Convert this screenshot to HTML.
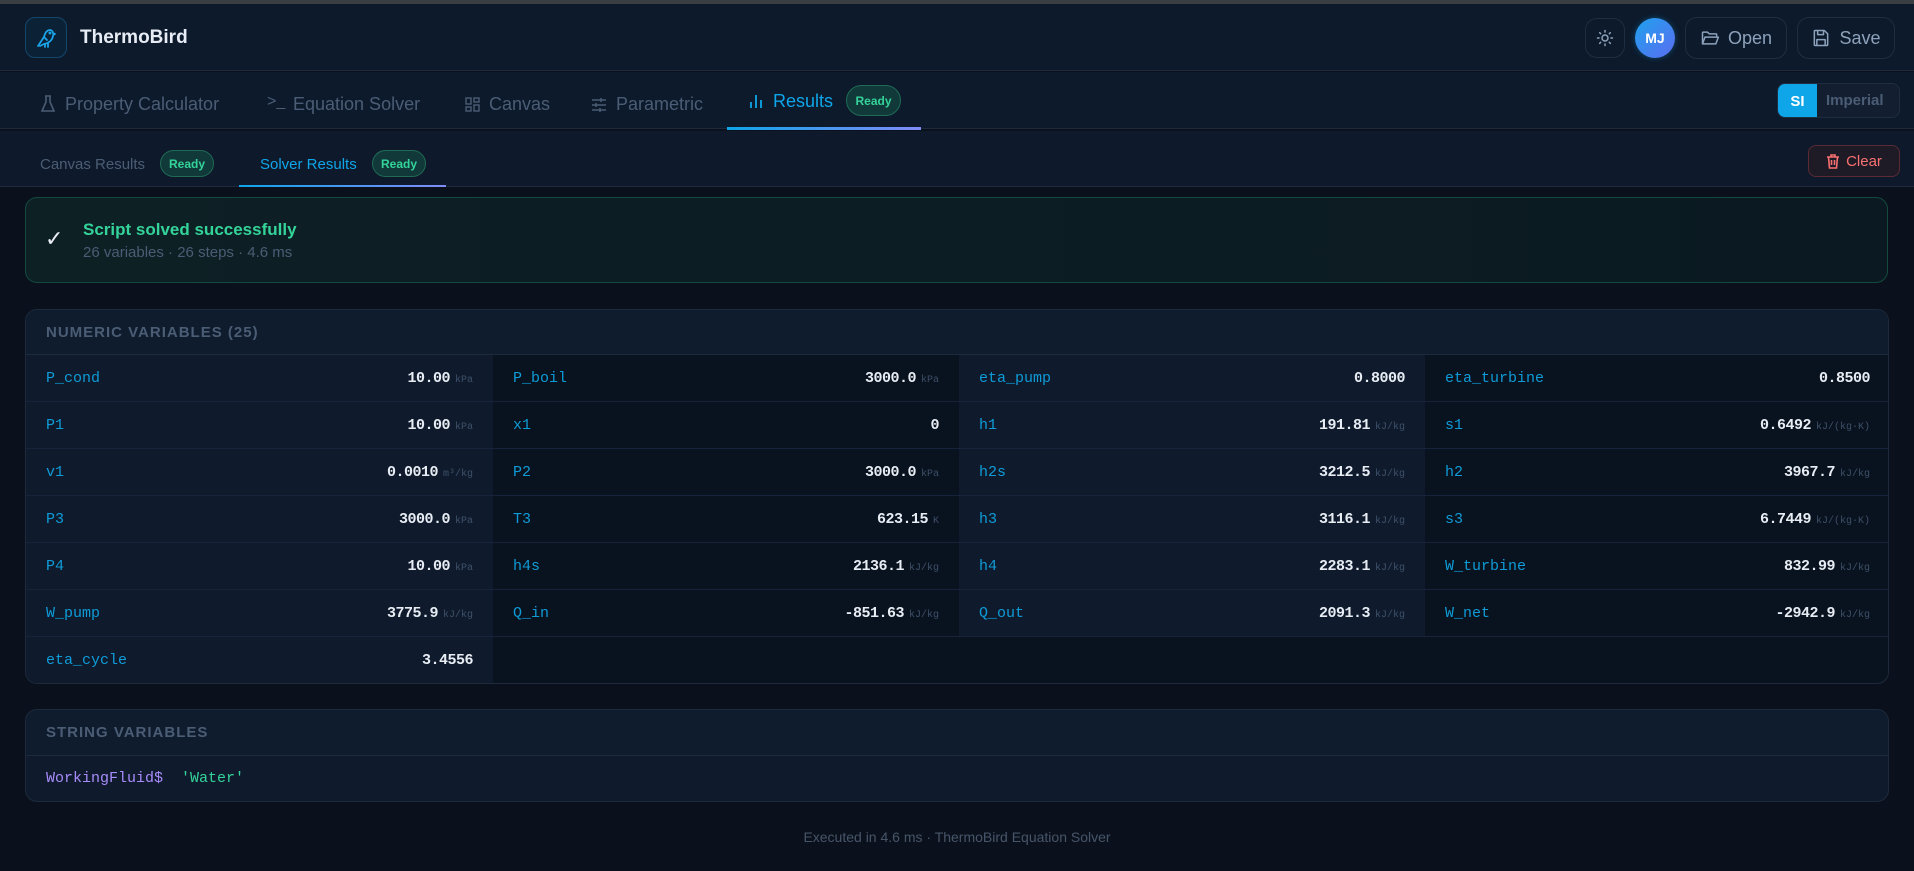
<!DOCTYPE html>
<html><head><meta charset="utf-8"><style>
*{box-sizing:border-box;margin:0;padding:0}
body{width:1914px;height:871px;background:#0a111c;font-family:"Liberation Sans",sans-serif;position:relative;overflow:hidden;color:#e2e8f0}
.a{position:absolute}
.topstrip{left:0;top:0;width:1914px;height:4px;background:#3a3d42}
.header{left:0;top:4px;width:1914px;height:67px;background:#0d1a2c;border-bottom:1px solid #1c2a3c}
.nav{left:0;top:72px;width:1914px;height:57px;background:#0d1a2c;border-bottom:1px solid #1c2a3c}
.sub{left:0;top:131px;width:1914px;height:56px;background:#0e1a2b;border-bottom:1px solid #1c2a3c}
.tab{font-size:18px;color:#4b5d75;top:94px;line-height:20px}
.badge{border:1px solid #1f6b55;background:#12393a;color:#34d399;font-weight:bold;font-size:12px;border-radius:16px;display:flex;align-items:center;justify-content:center}
.btn{border:1px solid #1f2d40;border-radius:12px;display:flex;align-items:center;justify-content:center;color:#8da2bb;font-size:18px;gap:8px}
.card{border:1px solid #1c2a3c;border-radius:12px;overflow:hidden}
.ch{background:#0f1c2e;border-bottom:1px solid #1c2a3c;color:#4b5d75;font-size:15px;font-weight:bold;letter-spacing:1px;padding-left:20px;display:flex;align-items:center}
.grid{display:grid;grid-template-columns:467px 466px 466px 465px}
.cell{height:47px;border-bottom:1px solid #17233a;display:flex;align-items:center;justify-content:space-between;padding:0 20px 0 20px;font-family:"Liberation Mono",monospace}
.c1{background:#0f1b2d}.c0{background:#09121f}
.lb{color:#0f9bd7;font-size:15px}
.v{color:#e8edf4;font-weight:bold;font-size:15px;letter-spacing:-0.5px}
.u{color:#3e5068;font-size:10px;margin-left:5px;font-weight:normal;letter-spacing:0}
</style></head><body>
<div class="a topstrip"></div>
<div class="a header"></div>
<div class="a" style="left:25px;top:17px;width:42px;height:41px;border:1px solid #14466a;background:#0b2236;border-radius:10px;display:flex;align-items:center;justify-content:center">
<svg width="24" height="24" viewBox="0 0 24 24" fill="none" stroke="#1aa3e8" stroke-width="1.8" stroke-linecap="round" stroke-linejoin="round"><path d="M4 20 L10 11 C11 7 13 4 16 4 C18 4 19 6 19 7 L21 8 L19 9 C19 14 15 17 10 18 L6 20"/><path d="M10 11 L13 14"/><path d="M11 18 L11 21 M14 17 L14 21"/><circle cx="16" cy="7" r="0.6" fill="#1aa3e8"/></svg></div>
<div class="a" style="left:80px;top:27px;font-size:19px;font-weight:bold;color:#e8edf5">ThermoBird</div>
<div class="a btn" style="left:1585px;top:18px;width:40px;height:40px"><svg width="18" height="18" viewBox="0 0 24 24" fill="none" stroke="#8da2bb" stroke-width="2" stroke-linecap="round"><circle cx="12" cy="12" r="4"/><path d="M12 2v2M12 20v2M4.9 4.9l1.4 1.4M17.7 17.7l1.4 1.4M2 12h2M20 12h2M4.9 19.1l1.4-1.4M17.7 6.3l1.4-1.4"/></svg></div>
<div class="a" style="left:1635px;top:18px;width:40px;height:40px;border-radius:50%;background:linear-gradient(135deg,#1ea2ee,#5b6cf0);box-shadow:0 0 6px #0e4a70;color:#fff;font-weight:bold;font-size:14px;display:flex;align-items:center;justify-content:center">MJ</div>
<div class="a btn" style="left:1685px;top:17px;width:102px;height:42px"><svg width="20" height="20" viewBox="0 0 24 24" fill="none" stroke="#8da2bb" stroke-width="1.8" stroke-linejoin="round"><path d="M3 19V6a1 1 0 0 1 1-1h5l2 2h8a1 1 0 0 1 1 1v2"/><path d="M3 19l3-8h16l-3 8z"/></svg>Open</div>
<div class="a btn" style="left:1797px;top:17px;width:98px;height:42px"><svg width="20" height="20" viewBox="0 0 24 24" fill="none" stroke="#8da2bb" stroke-width="1.8" stroke-linejoin="round"><path d="M5 3h11l4 4v13a1 1 0 0 1-1 1H5a1 1 0 0 1-1-1V4a1 1 0 0 1 1-1z"/><path d="M8 3v5h7V3M7 21v-7h10v7"/></svg>Save</div>

<div class="a nav"></div>
<svg class="a" style="left:41px;top:95px" width="14" height="18" viewBox="0 0 14 18" fill="none" stroke="#4b5d75" stroke-width="1.6"><path d="M4 1h6M5 1v6L1 16h12L9 7V1"/></svg>
<div class="a tab" style="left:65px">Property Calculator</div>
<div class="a tab" style="left:267px;top:92px;font-size:16px">&gt;_</div>
<div class="a tab" style="left:293px">Equation Solver</div>
<svg class="a" style="left:465px;top:97px" width="15" height="15" viewBox="0 0 15 15" fill="none" stroke="#4b5d75" stroke-width="1.4"><rect x="1" y="1" width="5" height="6"/><rect x="9" y="1" width="5" height="4"/><rect x="1" y="10" width="5" height="4"/><rect x="9" y="8" width="5" height="6"/></svg>
<div class="a tab" style="left:489px">Canvas</div>
<svg class="a" style="left:591px;top:97px" width="16" height="16" viewBox="0 0 16 16" fill="none" stroke="#4b5d75" stroke-width="1.5"><path d="M1 3h14M1 8h14M1 13h14M10 1v4M5 6v4M9 11v4"/></svg>
<div class="a tab" style="left:616px">Parametric</div>
<svg class="a" style="left:749px;top:93px" width="14" height="16" viewBox="0 0 14 16" fill="none" stroke="#0ea5e9" stroke-width="1.8"><path d="M2 9v6M7 2v13M12 7v8"/></svg>
<div class="a tab" style="left:773px;top:91px;color:#0ea5e9">Results</div>
<div class="a badge" style="left:846px;top:85px;width:55px;height:31px">Ready</div>
<div class="a" style="left:727px;top:127px;width:194px;height:3px;background:linear-gradient(90deg,#0ea5e9,#818cf8)"></div>
<div class="a" style="left:1777px;top:83px;width:123px;height:35px;border:1px solid #1f2d40;border-radius:8px;background:#131f31;overflow:hidden">
<div style="position:absolute;left:0;top:0;width:39px;height:35px;background:#0ea5e9;color:#fff;font-weight:bold;font-size:15px;display:flex;align-items:center;justify-content:center">SI</div>
<div style="position:absolute;left:48px;top:8px;color:#4b5d75;font-size:15px;font-weight:bold">Imperial</div></div>

<div class="a sub"></div>
<div class="a" style="left:40px;top:156px;font-size:15px;color:#4b5d75">Canvas Results</div>
<div class="a badge" style="left:160px;top:150px;width:54px;height:27px">Ready</div>
<div class="a" style="left:260px;top:156px;font-size:15px;color:#0ea5e9">Solver Results</div>
<div class="a badge" style="left:372px;top:150px;width:54px;height:27px">Ready</div>
<div class="a" style="left:239px;top:185px;width:207px;height:2px;background:linear-gradient(90deg,#0ea5e9,#818cf8)"></div>
<div class="a" style="left:1808px;top:145px;width:92px;height:32px;border:1px solid #5a2a35;background:#1e1a26;border-radius:8px;display:flex;align-items:center;justify-content:center;gap:6px;color:#f87171;font-size:15px"><svg width="14" height="15" viewBox="0 0 14 15" fill="none" stroke="#f87171" stroke-width="1.6"><path d="M1 3h12M5 3V1h4v2M2.5 3l1 11h7l1-11M5.5 6v5M8.5 6v5"/></svg>Clear</div>

<div class="a" style="left:25px;top:197px;width:1863px;height:86px;border:1px solid #144a3e;border-radius:12px;background:linear-gradient(90deg,#0d2024,#0b1a22)"></div>
<div class="a" style="left:45px;top:226px;font-size:22px;color:#e8edf5">✓</div>
<div class="a" style="left:83px;top:220px;font-size:17px;font-weight:bold;color:#34d399">Script solved successfully</div>
<div class="a" style="left:83px;top:244px;font-size:15px;color:#4b5d75">26 variables · 26 steps · 4.6 ms</div>

<div class="a card" style="left:25px;top:309px;width:1864px;height:375px;background:#09121f">
<div class="ch" style="height:45px">NUMERIC VARIABLES (25)</div>
<div class="grid">
<div class="cell c1"><span class="lb">P_cond</span><span class="v">10.00<span class="u">kPa</span></span></div>
<div class="cell c0"><span class="lb">P_boil</span><span class="v">3000.0<span class="u">kPa</span></span></div>
<div class="cell c1"><span class="lb">eta_pump</span><span class="v">0.8000</span></div>
<div class="cell c0"><span class="lb">eta_turbine</span><span class="v">0.8500</span></div>
<div class="cell c1"><span class="lb">P1</span><span class="v">10.00<span class="u">kPa</span></span></div>
<div class="cell c0"><span class="lb">x1</span><span class="v">0</span></div>
<div class="cell c1"><span class="lb">h1</span><span class="v">191.81<span class="u">kJ/kg</span></span></div>
<div class="cell c0"><span class="lb">s1</span><span class="v">0.6492<span class="u">kJ/(kg·K)</span></span></div>
<div class="cell c1"><span class="lb">v1</span><span class="v">0.0010<span class="u">m³/kg</span></span></div>
<div class="cell c0"><span class="lb">P2</span><span class="v">3000.0<span class="u">kPa</span></span></div>
<div class="cell c1"><span class="lb">h2s</span><span class="v">3212.5<span class="u">kJ/kg</span></span></div>
<div class="cell c0"><span class="lb">h2</span><span class="v">3967.7<span class="u">kJ/kg</span></span></div>
<div class="cell c1"><span class="lb">P3</span><span class="v">3000.0<span class="u">kPa</span></span></div>
<div class="cell c0"><span class="lb">T3</span><span class="v">623.15<span class="u">K</span></span></div>
<div class="cell c1"><span class="lb">h3</span><span class="v">3116.1<span class="u">kJ/kg</span></span></div>
<div class="cell c0"><span class="lb">s3</span><span class="v">6.7449<span class="u">kJ/(kg·K)</span></span></div>
<div class="cell c1"><span class="lb">P4</span><span class="v">10.00<span class="u">kPa</span></span></div>
<div class="cell c0"><span class="lb">h4s</span><span class="v">2136.1<span class="u">kJ/kg</span></span></div>
<div class="cell c1"><span class="lb">h4</span><span class="v">2283.1<span class="u">kJ/kg</span></span></div>
<div class="cell c0"><span class="lb">W_turbine</span><span class="v">832.99<span class="u">kJ/kg</span></span></div>
<div class="cell c1"><span class="lb">W_pump</span><span class="v">3775.9<span class="u">kJ/kg</span></span></div>
<div class="cell c0"><span class="lb">Q_in</span><span class="v">-851.63<span class="u">kJ/kg</span></span></div>
<div class="cell c1"><span class="lb">Q_out</span><span class="v">2091.3<span class="u">kJ/kg</span></span></div>
<div class="cell c0"><span class="lb">W_net</span><span class="v">-2942.9<span class="u">kJ/kg</span></span></div>
<div class="cell c1" style="border-bottom:none"><span class="lb">eta_cycle</span><span class="v">3.4556</span></div>
</div></div>

<div class="a card" style="left:25px;top:709px;width:1864px;height:93px;background:#0f1b2d">
<div class="ch" style="height:46px">STRING VARIABLES</div>
<div style="padding:14px 20px;font-family:'Liberation Mono',monospace;font-size:15px"><span style="color:#a78bfa">WorkingFluid$</span>&nbsp;&nbsp;<span style="color:#34d399">'Water'</span></div>
</div>

<div class="a" style="left:0;top:829px;width:1914px;text-align:center;font-size:14px;color:#475569">Executed in 4.6 ms · ThermoBird Equation Solver</div>
</body></html>
